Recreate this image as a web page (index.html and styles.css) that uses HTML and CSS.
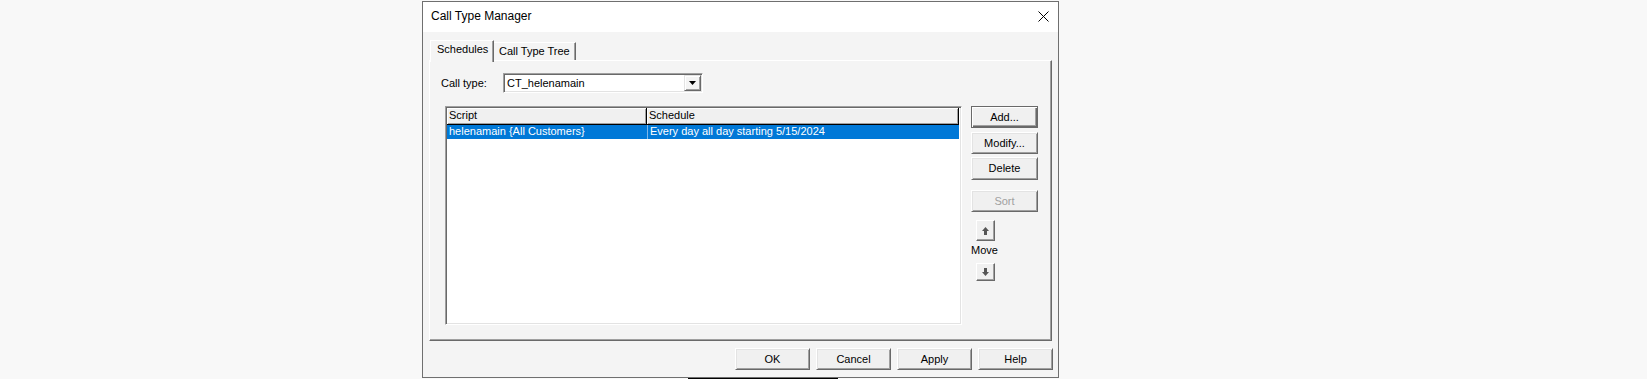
FILE: index.html
```html
<!DOCTYPE html>
<html lang="en">

<head>
    <meta charset="UTF-8" />
    <title>Call Type Manager</title>
    <link rel="stylesheet" href="styles.css">
</head>

<body>
    <div class="dialog">
        <div class="titlebar">
            <span class="title">Call Type Manager</span>
            <svg class="close" width="11" height="11" viewBox="0 0 11 11">
                <path d="M0.5 0.5 L10.5 10.5 M10.5 0.5 L0.5 10.5" stroke="#000" stroke-width="1" fill="none" />
            </svg>
        </div>

        <div class="body">
            <div class="tabs">
                <div class="tab active">Schedules</div>
                <div class="tab">Call Type Tree</div>
            </div>

            <div class="panel">
                <div class="calltype-row">
                    <label class="calltype-label">Call type:</label>
                    <div class="combo">
                        <span class="combo-text">CT_helenamain</span>
                        <span class="combo-btn">
                            <svg width="7" height="4" viewBox="0 0 7 4">
                                <path d="M0 0 H7 L3.5 4 Z" fill="#000" />
                            </svg>
                        </span>
                    </div>
                </div>

                <div class="main">
                    <div class="list">
                        <div class="list-head">
                            <div class="head-cell col-script">Script</div>
                            <div class="head-cell col-sched">Schedule</div>
                        </div>
                        <div class="list-row selected">
                            <div class="cell col-script">helenamain {All Customers}</div>
                            <div class="cell col-sched grid">Every day all day starting 5/15/2024</div>
                        </div>
                    </div>

                    <div class="side">
                        <button class="btn default">Add...</button>
                        <button class="btn btn-modify">Modify...</button>
                        <button class="btn btn-delete">Delete</button>
                        <button class="btn btn-sort" disabled>Sort</button>
                        <button class="arrow-btn up">
                            <svg width="7" height="8" viewBox="0 0 7 8">
                                <path d="M3.5 0 L7 4 H5 V8 H2 V4 H0 Z" fill="#555" />
                            </svg>
                        </button>
                        <span class="move-label">Move</span>
                        <button class="arrow-btn down">
                            <svg width="7" height="8" viewBox="0 0 7 8">
                                <path d="M3.5 8 L7 4 H5 V0 H2 V4 H0 Z" fill="#555" />
                            </svg>
                        </button>
                    </div>
                </div>
            </div>

            <div class="footer">
                <button class="btn btn-foot">OK</button>
                <button class="btn btn-foot">Cancel</button>
                <button class="btn btn-foot">Apply</button>
                <button class="btn btn-foot">Help</button>
            </div>
        </div>
    </div>
    <div class="backdrop-edge"></div>
</body>

</html>
```

FILE: styles.css
```css
:root {
    --face: #f4f4f4;
    --shadow: #a0a0a0;
    --dark: #696969;
    --light: #e3e3e3;
    --select: #0078d7;
}

body {
    margin: 0;
    padding-top: 1px;
    background: #f8f8f8;
    font-family: 'Liberation Sans', Arial, sans-serif;
    font-size: 11px;
    color: #000;
}

.dialog {
    margin-left: 422px;
    width: 637px;
    height: 377px;
    box-sizing: border-box;
    border: 1px solid #6f6f6f;
    background: var(--face);
    display: flex;
    flex-direction: column;
}

.titlebar {
    height: 30px;
    background: #fff;
    display: flex;
    align-items: center;
    padding: 0 9px 0 8px;
}

.title {
    font-size: 12px;
    padding-bottom: 2px;
}

.close {
    margin-left: auto;
    margin-bottom: 1px;
}

.body {
    padding: 8px 5px 0 6px;
    display: flex;
    flex-direction: column;
}

/* tabs */
.tabs {
    display: flex;
    align-items: flex-start;
    height: 20px;
    padding-left: 1px;
}

.tab {
    box-sizing: border-box;
    height: 18px;
    margin-top: 2px;
    padding: 0 4px 0 5px;
    line-height: 16px;
    border-top: 1px solid #fff;
    border-right: 1px solid var(--dark);
    border-left: 1px solid #fff;
    box-shadow: inset -1px 0 0 var(--shadow);
    background: var(--face);
}

.tab.active {
    height: 22px;
    margin-top: 0;
    width: 64px;
    line-height: 17px;
    padding-left: 6px;
    position: relative;
    z-index: 1;
}

.tab:not(.active) {
    width: 82px;
    border-left: none;
    padding-left: 5px;
}

.panel {
    box-sizing: border-box;
    height: 281px;
    margin-right: 1px;
    padding: 12px 0 0 11px;
    border-top: 1px solid #fff;
    border-left: 1px solid #fff;
    border-right: 1px solid var(--dark);
    border-bottom: 1px solid var(--dark);
    box-shadow: inset -1px -1px 0 var(--shadow);
}

/* call type combo */
.calltype-row {
    display: flex;
    align-items: center;
    height: 20px;
}

.calltype-label {
    width: 62px;
    padding-bottom: 1px;
}

.combo {
    box-sizing: border-box;
    width: 200px;
    height: 20px;
    display: flex;
    align-items: center;
    background: #fff;
    border-top: 1px solid var(--shadow);
    border-left: 1px solid var(--shadow);
    border-right: 1px solid #fff;
    border-bottom: 1px solid #fff;
    box-shadow: inset 1px 1px 0 var(--dark), inset -1px -1px 0 var(--light);
}

.combo-text {
    padding-left: 3px;
}

.combo-btn {
    margin-left: auto;
    margin-right: 1px;
    box-sizing: border-box;
    width: 17px;
    height: 16px;
    display: flex;
    align-items: center;
    justify-content: center;
    background: var(--face);
    border-top: 1px solid var(--light);
    border-left: 1px solid var(--light);
    border-right: 1px solid var(--dark);
    border-bottom: 1px solid var(--dark);
    box-shadow: inset 1px 1px 0 #fff, inset -1px -1px 0 var(--shadow);
}

/* list view */
.main {
    display: flex;
    margin-top: 13px;
    margin-left: 4px;
}

.list {
    box-sizing: border-box;
    width: 517px;
    height: 219px;
    background: #fff;
    border-top: 1px solid var(--shadow);
    border-left: 1px solid var(--shadow);
    border-right: 1px solid #fff;
    border-bottom: 1px solid #fff;
    box-shadow: inset 1px 1px 0 var(--dark), inset -1px -1px 0 var(--light);
    padding: 1px 0 0 1px;
}

.list-head {
    display: flex;
    height: 17px;
}

.head-cell {
    box-sizing: border-box;
    height: 17px;
    line-height: 15px;
    padding-left: 2px;
    background: #f0f0f0;
    border-right: 1px solid #000;
    border-bottom: 1px solid #000;
    box-shadow: inset 1px 1px 0 #fff, inset -1px -1px 0 var(--shadow);
}

.col-script {
    width: 200px;
}

.col-sched {
    width: 312px;
}

.list-row {
    display: flex;
    height: 14px;
}

.list-row.selected {
    background: var(--select);
    color: #fff;
    width: 512px;
}

.cell {
    box-sizing: border-box;
    line-height: 13px;
    padding-left: 2px;
    white-space: nowrap;
}

.cell.grid {
    border-left: 1px solid #7fb7e9;
    padding-left: 2px;
}

/* buttons */
.side {
    display: flex;
    flex-direction: column;
    align-items: flex-start;
    margin-left: 9px;
    width: 67px;
}

.btn {
    box-sizing: border-box;
    width: 67px;
    height: 22px;
    margin: 0;
    padding: 0 0 1px;
    font-family: inherit;
    font-size: 11px;
    color: #000;
    background: #f0f0f0;
    border-top: 1px solid #fff;
    border-left: 1px solid #fff;
    border-right: 1px solid var(--dark);
    border-bottom: 1px solid var(--dark);
    box-shadow: inset 1px 1px 0 var(--light), inset -1px -1px 0 var(--shadow);
    border-radius: 0;
}

.btn.default {
    border: 1px solid var(--dark);
    box-shadow: inset 1px 1px 0 #fff, inset -1px -1px 0 var(--dark), inset -2px -2px 0 var(--shadow);
}

.btn.btn-modify {
    margin-top: 4px;
}

.btn.btn-delete {
    margin-top: 3px;
    height: 23px;
}

.btn.btn-sort {
    margin-top: 10px;
    color: var(--shadow);
}

.arrow-btn {
    box-sizing: border-box;
    width: 19px;
    height: 21px;
    margin: 8px 0 0 5px;
    padding: 0;
    display: flex;
    align-items: center;
    justify-content: center;
    background: #f0f0f0;
    border-top: 1px solid #fff;
    border-left: 1px solid #fff;
    border-right: 1px solid var(--dark);
    border-bottom: 1px solid var(--dark);
    box-shadow: inset -1px -1px 0 var(--shadow);
    border-radius: 0;
}

.arrow-btn.down {
    height: 18px;
    margin-top: 6px;
}

.move-label {
    margin-top: 2px;
    line-height: 14px;
    font-size: 11px;
}

/* footer */
.footer {
    display: flex;
    justify-content: flex-end;
    gap: 6px;
    margin-top: 7px;
}

.btn-foot {
    width: 75px;
}

.backdrop-edge {
    margin-left: 688px;
    width: 150px;
    height: 1px;
    background: #000;
}
```
